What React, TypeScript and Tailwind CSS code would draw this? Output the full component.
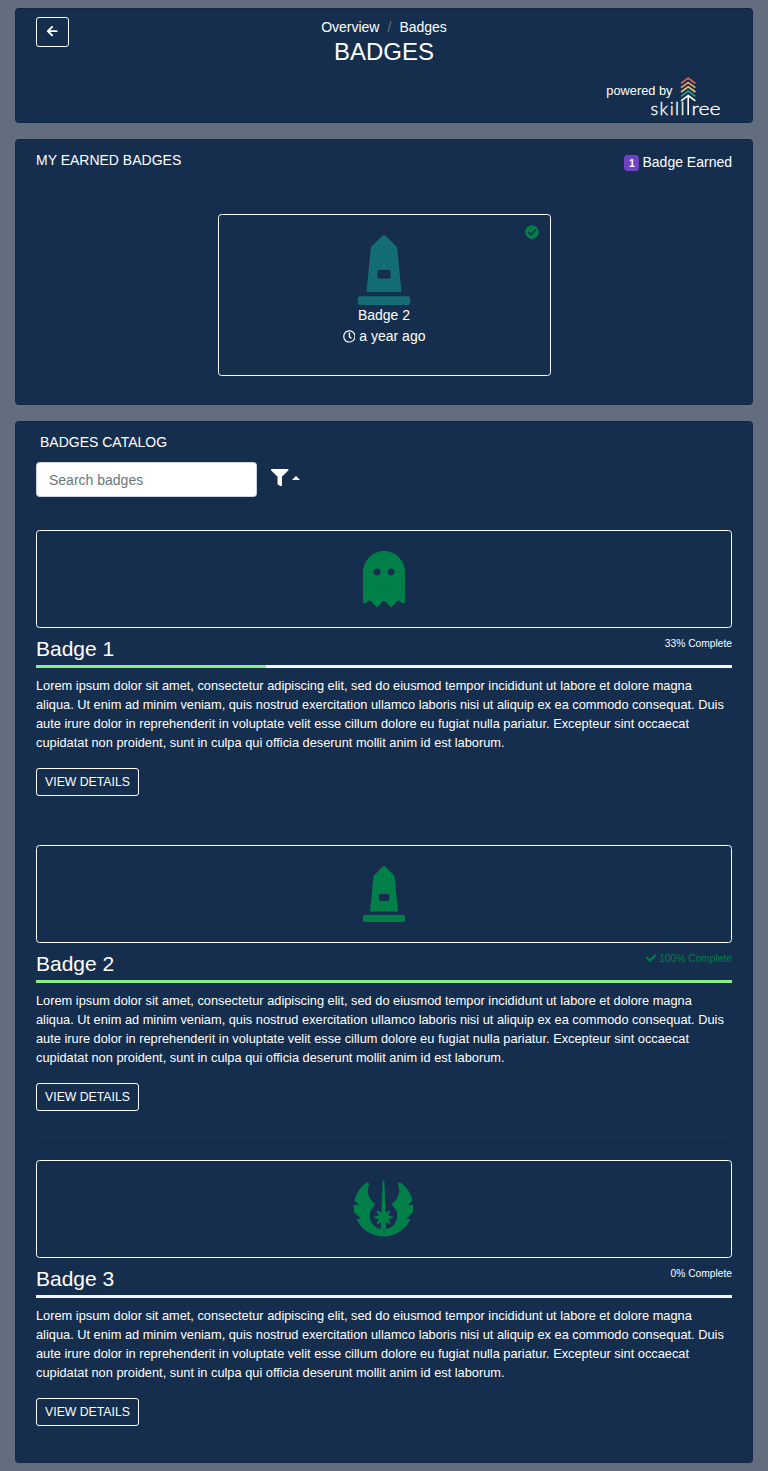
import { FaArrowLeft, FaCheck, FaCheckCircle, FaFilter, FaGhost, FaJedi, FaMonument, FaRegClock } from 'react-icons/fa';
import type { IconType } from 'react-icons';

const LOREM =
  'Lorem ipsum dolor sit amet, consectetur adipiscing elit, sed do eiusmod tempor incididunt ut labore et dolore magna aliqua. Ut enim ad minim veniam, quis nostrud exercitation ullamco laboris nisi ut aliquip ex ea commodo consequat. Duis aute irure dolor in reprehenderit in voluptate velit esse cillum dolore eu fugiat nulla pariatur. Excepteur sint occaecat cupidatat non proident, sunt in culpa qui officia deserunt mollit anim id est laborum.';

type Badge = { name: string; percent: number; icon: IconType; iconClass: string };

const badges: Badge[] = [
  { name: 'Badge 1', percent: 33, icon: FaGhost, iconClass: 'h-14' },
  { name: 'Badge 2', percent: 100, icon: FaMonument, iconClass: 'h-14' },
  { name: 'Badge 3', percent: 0, icon: FaJedi, iconClass: 'mr-px mb-px h-[63px]' },
];

const CARD = 'rounded-[3.5px] border border-[#132945] bg-[#152e4d]';

function SkillTreeLogo() {
  return (
    <svg width="70" height="40" viewBox="0 0 70 40" fill="none" className="overflow-visible">
      <g strokeWidth="1.6">
        <path d="M31 7.4 38.2 2.2 45.4 7.4" stroke="#e0705a" />
        <path d="M31 11.7 38.2 6.5 45.4 11.7" stroke="#eda265" />
        <path d="M31 16 38.2 10.8 45.4 16" stroke="#e8c36b" />
        <path d="M31 20.3 38.2 15.1 45.4 20.3" stroke="#2a9d8f" />
        <path d="M31 24.8 38.2 19.6 45.4 24.8M38.2 19.8V39" stroke="#fff" />
      </g>
      <g fill="#fff" stroke="#fff" strokeWidth="0.35" fontSize="18" className="font-['Lato',sans-serif] font-light">
        <text x="0.5" y="38.5" textLength="34" lengthAdjust="spacing">skill</text>
        <text x="41.5" y="38.5" textLength="29" lengthAdjust="spacingAndGlyphs">ree</text>
      </g>
    </svg>
  );
}

function CatalogItem({ badge, last }: { badge: Badge; last: boolean }) {
  const Icon = badge.icon;
  const done = badge.percent === 100;
  return (
    <article>
      <div className="flex h-[98px] items-center justify-center rounded-[3.5px] border border-white">
        <Icon className={`${badge.iconClass} w-auto text-[#007f49]`} />
      </div>
      <div className="flex h-[37px] items-start justify-between pt-2">
        <h3 className="text-[21px] leading-[26px]">{badge.name}</h3>
        <span className={`flex items-center gap-[3px] text-[10.24px] leading-[15px] ${done ? 'text-[#007f49]' : ''}`}>
          {done && <FaCheck className="size-[10.24px]" />}
          {badge.percent}% Complete
        </span>
      </div>
      <div className="h-[3px] bg-[#f5f5f5]">
        <div className="h-full bg-[#88f082]" style={{ width: `${badge.percent}%` }} />
      </div>
      <p className="mt-2 text-[12.8px] leading-[19px]">{LOREM}</p>
      <button className="mt-4 block h-7 w-[103px] rounded-[3px] border border-white text-[12.25px] leading-[18px]">VIEW DETAILS</button>
      {!last && <hr className="mt-8 mb-4 border-[#132945]" />}
    </article>
  );
}

export default function App() {
  return (
    <main className="flex h-[1471px] flex-col gap-4 bg-[#626d7d] px-[15px] py-2 font-['Liberation_Sans',sans-serif] text-[14px] leading-[21px] text-white">
      <header className={`${CARD} h-[115px] px-5`}>
        <div className="grid h-[58px] grid-cols-3 items-start pt-2">
          <button aria-label="Back" className="flex h-[30px] w-[33px] items-center justify-center rounded-[3px] border border-white">
            <FaArrowLeft className="mb-px size-[12.25px]" />
          </button>
          <div className="text-center">
            <nav className="flex justify-center gap-2">
              <a>Overview</a>
              <span className="text-[#6c757d]">/</span>
              <a>Badges</a>
            </nav>
            <h1 className="text-[24px] leading-[28px]">BADGES</h1>
          </div>
        </div>
        <div className="flex items-start justify-end pt-[9px] pr-3">
          <span className="-mr-[22.5px] pt-[5px] text-[12.8px] leading-[19px]">powered by</span>
          <SkillTreeLogo />
        </div>
      </header>

      <section className={`${CARD} h-[266px]`}>
        <div className="flex h-[46px] justify-between border-b border-[#132945] px-5 pt-[10px]">
          <h2>MY EARNED BADGES</h2>
          <div className="flex h-6 items-center gap-[3px]">
            <span className="mt-px flex h-4 w-[15px] items-center justify-center rounded-[3.5px] bg-[#6f42c1] pt-px text-[10.5px] font-bold leading-none">1</span>
            Badge Earned
          </div>
        </div>
        <div className="flex justify-center pt-7">
          <div className="relative flex h-[162px] w-[333px] flex-col items-center rounded-[3.5px] border border-white pt-5">
            <FaCheckCircle className="absolute top-[10px] right-[10.5px] size-[14px] text-[#007f49]" />
            <FaMonument className="h-[70px] w-auto text-[#146c75]" />
            <div>Badge 2</div>
            <div className="flex items-center gap-1">
              <FaRegClock className="size-[12.8px]" />a year ago
            </div>
          </div>
        </div>
      </section>

      <section className={`${CARD} h-[1042px]`}>
        <div className="h-[88px] border-b border-[#132945] px-5 pt-[10px]">
          <h2 className="pl-1">BADGES CATALOG</h2>
          <div className="mt-[9px] flex">
            <input
              placeholder="Search badges"
              className="h-[35px] w-[221px] rounded-[3.5px] border border-[#ced4da] bg-white px-3 text-[14px] text-gray-700 placeholder:text-[#6c757d]"
            />
            <button aria-label="Filter" className="ml-[14px] flex h-[31px] items-center gap-[3.5px]">
              <FaFilter className="size-[17.5px]" />
              <svg width="8" height="4" viewBox="0 0 8 4" className="mt-px">
                <path d="M0 4 4 0 8 4Z" fill="currentColor" />
              </svg>
            </button>
          </div>
        </div>
        <div className="px-5 pt-5">
          {badges.map((badge, index) => (
            <CatalogItem key={badge.name} badge={badge} last={index === badges.length - 1} />
          ))}
        </div>
      </section>
    </main>
  );
}
